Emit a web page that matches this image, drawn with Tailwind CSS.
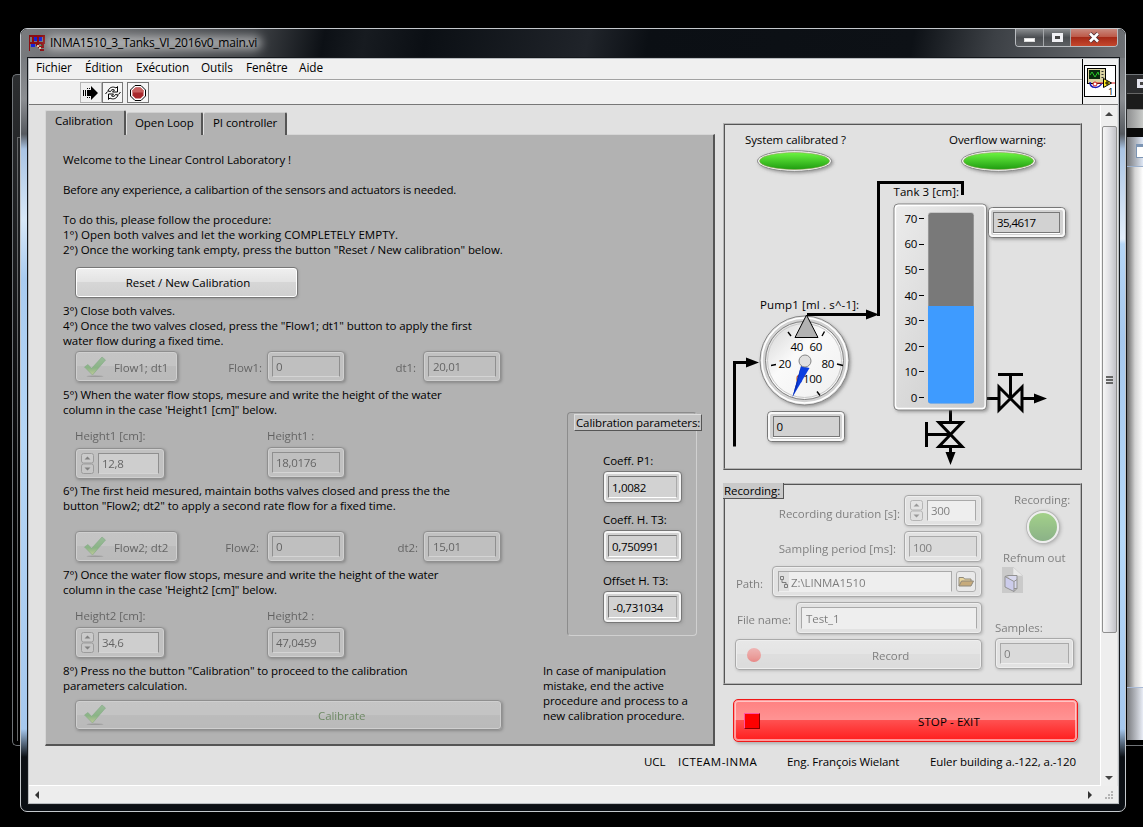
<!DOCTYPE html>
<html lang="fr">
<head>
<meta charset="utf-8">
<title>INMA1510_3_Tanks_VI_2016v0_main.vi</title>
<script src="https://cdn.jsdelivr.net/npm/@tailwindcss/browser@4"></script>
</head>
<body class="relative h-[827px] w-[1143px] overflow-hidden bg-black font-['Open_Sans','Noto_Sans',sans-serif] text-[11.5px] leading-[15px] tracking-[-0.08px] whitespace-nowrap text-black">

<!-- shared symbols -->
<svg class="absolute h-0 w-0">
  <defs>
    <linearGradient id="tick" x1="0" y1="0" x2="0" y2="1"><stop offset="0" stop-color="#7cc47c"/><stop offset="0.6" stop-color="#5cb852"/><stop offset="1" stop-color="#d2e67a"/></linearGradient>
    <symbol id="check" viewBox="0 0 24 22">
      <ellipse cx="12" cy="20.200" rx="8.500" ry=".8" fill="#555" opacity=".6"/>
      <path d="M1.500 11 L5 8.500 L8.500 12.500 L19 1 L22.500 4 L9.500 19 Z" fill="url(#tick)" stroke="#4aa04e" stroke-width=".6"/>
    </symbol>
    <symbol id="spin" viewBox="0 0 13 21">
      <rect x=".5" y=".5" width="12" height="9.500" rx="2" fill="#e8e8e8" stroke="#808080"/>
      <rect x=".5" y="11" width="12" height="9.500" rx="2" fill="#e0e0e0" stroke="#808080"/>
      <path d="M6.500 3.500 L9.500 6.500 H3.500Z M6.500 17.500 L3.500 14.500 H9.500Z" fill="#444"/>
    </symbol>
  </defs>
</svg>

<!-- window behind -->
<div class="absolute left-[12px] top-[74px] h-[672px] w-[1131px] rounded-l-[5px] border border-r-0 border-[#707478] bg-gradient-to-b from-[#2c2e30] via-[#0c0d0f] to-black">
  <div class="absolute left-[4px] top-[62px] h-[604px] w-3 border-l border-t border-[#66686a]"></div>
  <div class="absolute left-[1114px] top-0 flex h-[670px] w-[16px] flex-col overflow-hidden">
    <div class="h-[18px] bg-[#2b2c2e] pl-[10px] pt-[4px]"><div class="h-[9px] w-3 border-[3px] border-[#e4e4ee] bg-[#444]"></div></div>
    <div class="h-[16px] border-t border-[#666] bg-[#1c1c1c]"></div>
    <div class="h-[19px] border-t border-[#888] bg-gradient-to-r from-[#8e8f90] to-[#c8cac8]"></div>
    <div class="h-[9px] bg-[#0a0a0a]"></div>
    <div class="h-[30px] border-b border-[#9bb0cc] bg-gradient-to-r from-[#77797d] to-[#dfe8f6] pl-[9px] pt-[7px]"><div class="h-[14px] w-3 border border-t-[3px] border-[#7c95b4] bg-white"></div></div>
    <div class="h-[520px] bg-gradient-to-r from-[#6a6a6a] via-[#d5d5d5] to-white"></div>
    <div class="h-[53px] border-t border-[#a9bad6] bg-gradient-to-r from-[#7a7c80] to-[#e9edf6]"></div>
    <div class="h-[5px] border-t border-black bg-black"></div>
  </div>
</div>

<!-- main window -->
<div class="absolute left-[20px] top-[28px] flex h-[784px] w-[1106px] flex-col rounded-[7px] border border-[#c4c8cc] bg-[#0b0f14]">
  <!-- glass side borders -->
  <div class="absolute left-0 top-[10px] h-[720px] w-[7px] bg-[linear-gradient(to_bottom,#6f7276_0,#8b8e92_60px,#55595f_95px,#a9c4e4_110px,#d8e8f8_180px,#a9cbf0_240px,#b5d6f6_400px,#a6c8ee_690px,#0b0f14_718px)]"></div>
  <div class="absolute right-0 top-[10px] h-[720px] w-[7px] bg-[linear-gradient(to_bottom,#6f7276_0,#8b8e92_60px,#55595f_95px,#a9c4e4_110px,#e4effb_200px,#b5d6f6_205px,#a6c8ee_300px,#b5d9fa_500px,#a6c8ee_690px,#0b0f14_718px)]"></div>

  <!-- title bar -->
  <div class="relative flex h-[29px] shrink-0 items-start rounded-t-[6px] bg-[linear-gradient(100deg,#797b7e_0,#66686b_90px,#3f4246_230px,#0c1015_300px,#171b20_340px,#0b0f14_400px,#20242a_560px,#0b0f14_620px,#0d1116_880px,#3c4045_960px,#6d7074_1090px)] pl-[8px]">
    <svg class="mt-[6px] h-4 w-4" viewBox="0 0 16 16" shape-rendering="crispEdges">
      <path d="M0 0h16v2H0zM0 0h1v16H0zM3 1h2v6H3zM14 1h2v8h-2zM1 7h15v2H1zM7 8h3v3H7zM9 11h6v2H9zM11 14h4v2h-4z" fill="#8c0e12"/>
      <path d="M5 2h3v4H5zM10 2h3v4h-3z" fill="#1622d8"/><path d="M2 9h4v3H2z" fill="#1622d8"/>
      <path d="M8 10h2v2H8zM10 12h2v2h-2z" fill="#e0c0a0"/><path d="M12 9h3v2h-3z" fill="#8c0e12"/><path d="M12 10h1v1h-1z" fill="#177c28"/><path d="M8 2h2v5H8z" fill="#8c0e12"/>
    </svg>
    <div class="relative ml-[5px] mt-[6px] text-[12px] leading-[16px] tracking-[-0.24px]">
      <div class="absolute -left-1 top-[1px] h-[14px] w-[216px] rounded-full bg-white/50 blur-[5px]"></div>
      <span class="relative">INMA1510_3_Tanks_VI_2016v0_main.vi</span>
    </div>
    <div class="absolute right-[7px] top-0 flex h-[18px] w-[103px] overflow-hidden rounded-b-[4px] border border-t-0 border-[#b9bcc0]">
      <div class="flex w-[28px] justify-center border-r border-[#a4a7aa] bg-gradient-to-b from-[#8a8d90] via-[#4b4e52] to-[#5c5f62] pt-[9px]"><div class="h-[4px] w-[11px] border border-[#ddd] bg-white"></div></div>
      <div class="flex w-[27px] justify-center border-r border-[#a4a7aa] bg-gradient-to-b from-[#8a8d90] via-[#4b4e52] to-[#5c5f62] pt-[4px]"><div class="h-[9px] w-[11px] border-[3px] border-[#f0f0f4] bg-[#444]"></div></div>
      <div class="flex flex-1 justify-center bg-[linear-gradient(#c9897e,#bd5b4a_45%,#a52a18_50%,#c5482d)] pt-[3px]">
        <svg class="h-[11px] w-3" viewBox="0 0 12 11"><path d="M2 1.500 L10 9.500 M10 1.500 L2 9.500" stroke="#4d3035" stroke-width="4.200"/><path d="M2 1.500 L10 9.500 M10 1.500 L2 9.500" stroke="#fff" stroke-width="2.600"/></svg>
      </div>
    </div>
  </div>

  <!-- client area -->
  <div class="relative ml-[7px] mr-[6px] flex h-[746px] flex-col border border-[#b8bcc0] bg-[#e1e1e1] outline outline-1 outline-[#15181c]">
    <!-- menu and toolbar -->
    <div class="flex h-[46px] shrink-0 border-b border-[#777] bg-[#f0f0f0]">
      <div class="flex flex-1 flex-col">
        <div class="flex h-[21px] items-start border-b border-[#a2a2a2] pl-[7px] pt-[1px] text-[11.8px]">
          <span class="w-[49px]">Fichier</span><span class="w-[51px]">Édition</span><span class="w-[65px]">Exécution</span><span class="w-[45px]">Outils</span><span class="w-[53px]">Fenêtre</span><span>Aide</span>
        </div>
        <div class="flex flex-1 border-t border-white pl-[51px] pt-[1px]">
          <div class="flex h-[21px] w-[22px] items-center justify-center border border-[#b5b5b5]">
            <svg class="h-4 w-4" viewBox="0 0 16 16"><path d="M4 5h4V1l7 7-7 7v-4H4z" fill="#000"/><path d="M.5 5v6M2.500 5v6" stroke="#000"/><path d="M4 3.500h3M4 12.500h3" stroke="#000" stroke-dasharray="1 1"/></svg>
          </div>
          <div class="flex h-[21px] w-[21px] items-center justify-center border border-[#777] bg-[#f5f5f5]">
            <svg class="h-4 w-4" viewBox="0 0 16 16" fill="#fff" stroke="#000" stroke-linejoin="round"><path d="M3 6 C4 2.500 8 1 11 3 L12.500 1.500 V7 H7.500 L9.500 5 C7.500 4 6 5 5.500 6.500 Z"/><path d="M13 10 C12 13.500 8 15 5 13 L3.500 14.500 V9 H8.500 L6.500 11 C8.500 12 10 11 10.500 9.500 Z"/><path d="M2.500 6.500 L.5 9 M13.500 9.500 L15.500 7"/></svg>
          </div>
          <div class="ml-[4px] flex h-[21px] w-[22px] items-center justify-center border border-[#777] bg-[#f5f5f5]">
            <svg class="h-4 w-4" viewBox="0 0 16 16"><path d="M5 .5h6L15.500 5v6L11 15.500H5L.5 11V5z" fill="#fff" stroke="#000"/><path d="M5.500 2.500h5l3 3v5l-3 3h-5l-3-3v-5z" fill="#a8282c"/><path d="M5.500 2.500h5l3 3V7.500h-11v-2z" fill="#c8605f"/></svg>
          </div>
        </div>
      </div>
      <div class="w-[36px] border-l border-black pl-[1px] pt-[6px]">
        <svg class="h-8 w-8" viewBox="0 0 32 32">
          <rect x=".5" y=".5" width="31" height="31" fill="#fff" stroke="#000"/>
          <rect x="3.500" y="3.500" width="18" height="15" fill="#d9d2a0" stroke="#000"/><rect x="5" y="5" width="11" height="9" fill="#0b2a0d"/>
          <path d="M6 10 l2-3 l3 5 l3-5 l1 3" fill="none" stroke="#28c828"/><path d="M18.500 6v1M18.500 9v1M18.500 12v1" stroke="#333" stroke-width="2"/>
          <path d="M6 17 c0 7 9 7 12 1" fill="none" stroke="#1a1ab8" stroke-width="1.500"/><circle cx="11" cy="19" r="2" fill="#fff" stroke="#d01818"/><path d="M13 18 h6 M27 18h4" stroke="#e02020" stroke-width="1.200"/>
          <path d="M19.500 13.500 v9 l8-4.500z" fill="#ffe920" stroke="#000"/><path d="M21 18h4M23 16v4" stroke="#000"/>
          <text x="24" y="29.500" font-size="9.500" font-family="Open Sans">1</text>
        </svg>
      </div>
    </div>

    <div class="flex flex-1">
      <!-- front panel -->
      <div class="flex w-[1071px] flex-col border-b border-white pl-[16px] pt-[5px]">
        <div class="flex h-[637px] shrink-0">
          <!-- tabs -->
          <div class="flex w-[670px] flex-col">
            <div class="relative z-10 flex h-[25px] items-end gap-[1px]">
              <div class="h-[25px] w-[81px] rounded-t-[2px] border-l border-r-2 border-t border-l-[#d6d6d6] border-r-[#555] border-t-[#d6d6d6] bg-[#b2b2b2] pl-[9px] pt-[2px]">Calibration</div>
              <div class="h-[23px] w-[76px] rounded-t-[2px] border-r-2 border-t border-r-[#555] border-t-[#d0d0d0] bg-[#b2b2b2] pl-[8px] pt-[2px]">Open Loop</div>
              <div class="h-[23px] w-[83px] rounded-t-[2px] border-r-2 border-t border-r-[#555] border-t-[#d0d0d0] bg-[#b2b2b2] pl-[9px] pt-[2px]">PI controller</div>
            </div>
            <div class="-mt-[1px] flex h-[612px] border-b-2 border-l border-r-2 border-t border-[#555] border-l-[#d6d6d6] border-t-[#d6d6d6] bg-[#b2b2b2]">
              <div class="flex w-[497px] flex-col pl-[17px] pt-[17px]">
                <p class="whitespace-pre">Welcome to the Linear Control Laboratory !

<span class="tracking-[-0.17px]">Before any experience, a calibartion of the sensors and actuators is needed.</span>

To do this, please follow the procedure:
<span class="tracking-[0.02px]">1°) Open both valves and let the working COMPLETELY EMPTY.</span>
<span class="tracking-[-0.06px]">2°) Once the working tank empty, press the button "Reset / New calibration" below.</span></p>
                <div class="ml-[12px] mt-[10px] flex h-[31px] w-[223px] items-center justify-center rounded-[4px] border border-[#777] bg-[linear-gradient(#f0f0f0,#e2e2e2_50%,#d6d6d6_50%,#cfcfcf)] pl-[3px] tracking-[-0.04px] shadow-[inset_0_0_0_1px_#fff,1px_1px_2px_#8886]">Reset / New Calibration</div>
                <p class="mt-[5px]">3°) Close both valves.<br>4°) Once the two valves closed, press the "Flow1; dt1" button to apply the first<br>water flow during a fixed time.</p>
                <div class="ml-[12px] mt-[3px] flex h-[31px] items-center opacity-45">
                  <div class="flex h-[31px] w-[103px] items-center rounded-[4px] border border-[#666] bg-[linear-gradient(#dcdcdc,#dadada_50%,#c9c9c9_50%,#c4c4c4)] pl-[7px] shadow-[inset_0_0_0_1px_#f2f2f2,1px_1px_3px_#555]"><svg class="h-[22px] w-6"><use href="#check"/></svg><span class="ml-[7px] pt-[1px]">Flow1; dt1</span></div>
                  <div class="w-[89px] pr-[5px] pt-[1px] text-right">Flow1:</div>
                  <div class="h-[31px] w-[78px] rounded-[4px] border border-[#666] bg-[#d4d4d4] p-[4px] shadow-[inset_0_0_0_1px_#f5f5f5,1px_1px_3px_#555]"><div class="h-[21px] border border-[#666] border-b-white bg-[#cfcfcf] pl-[3px] pt-[2px] tracking-[-0.3px]">0</div></div>
                  <div class="w-[78px] pr-[7px] pt-[1px] text-right">dt1:</div>
                  <div class="h-[31px] w-[78px] rounded-[4px] border border-[#666] bg-[#d4d4d4] p-[4px] shadow-[inset_0_0_0_1px_#f5f5f5,1px_1px_3px_#555]"><div class="h-[21px] border border-[#666] border-b-white bg-[#cfcfcf] pl-[4px] pt-[2px] tracking-[-0.3px]">20,01</div></div>
                </div>
                <p class="mt-[5px]"><span class="tracking-[-0.11px]">5°) When the water flow stops, mesure and write the height of the water</span><br>column in the case 'Height1 [cm]" below.</p>
                <div class="ml-[12px] mt-[11px] flex h-[50px] gap-[102px] opacity-45">
                  <div class="w-[90px]">
                    <div>Height1 [cm]:</div>
                    <div class="mt-[5px] flex h-[31px] items-center gap-[4px] rounded-[4px] border border-[#666] bg-[#d4d4d4] px-[5px] shadow-[inset_0_0_0_1px_#f5f5f5,1px_1px_3px_#555]"><svg class="h-[21px] w-[13px]"><use href="#spin"/></svg><div class="h-[21px] flex-1 border border-[#666] border-b-white bg-[#f0f0f0] pl-[3px] pt-[2px] tracking-[-0.3px]">12,8</div></div>
                  </div>
                  <div class="w-[78px]">
                    <div>Height1 :</div>
                    <div class="mt-[4px] h-[31px] rounded-[4px] border border-[#666] bg-[#d4d4d4] p-[4px] shadow-[inset_0_0_0_1px_#f5f5f5,1px_1px_3px_#555]"><div class="h-[21px] border border-[#666] border-b-white bg-[#cfcfcf] pl-[3px] pt-[2px] tracking-[-0.3px]">18,0176</div></div>
                  </div>
                </div>
                <p class="mt-[5px]"><span class="tracking-[-0.12px]">6°) The first heid mesured, maintain boths valves closed and press the the</span><br>button "Flow2; dt2" to apply a second rate flow for a fixed time.</p>
                <div class="ml-[12px] mt-[18px] flex h-[31px] items-center opacity-45">
                  <div class="flex h-[31px] w-[103px] items-center rounded-[4px] border border-[#666] bg-[linear-gradient(#dcdcdc,#dadada_50%,#c9c9c9_50%,#c4c4c4)] pl-[7px] shadow-[inset_0_0_0_1px_#f2f2f2,1px_1px_3px_#555]"><svg class="h-[22px] w-6"><use href="#check"/></svg><span class="ml-[7px] pt-[1px]">Flow2; dt2</span></div>
                  <div class="w-[89px] pr-[8px] pt-[1px] text-right">Flow2:</div>
                  <div class="h-[31px] w-[78px] rounded-[4px] border border-[#666] bg-[#d4d4d4] p-[4px] shadow-[inset_0_0_0_1px_#f5f5f5,1px_1px_3px_#555]"><div class="h-[21px] border border-[#666] border-b-white bg-[#cfcfcf] pl-[3px] pt-[2px] tracking-[-0.3px]">0</div></div>
                  <div class="w-[78px] pr-[5px] pt-[1px] text-right">dt2:</div>
                  <div class="h-[31px] w-[78px] rounded-[4px] border border-[#666] bg-[#d4d4d4] p-[4px] shadow-[inset_0_0_0_1px_#f5f5f5,1px_1px_3px_#555]"><div class="h-[21px] border border-[#666] border-b-white bg-[#cfcfcf] pl-[4px] pt-[2px] tracking-[-0.3px]">15,01</div></div>
                </div>
                <p class="mt-[5px]"><span class="tracking-[-0.11px]">7°) Once the water flow stops, mesure and write the height of the water</span><br>column in the case 'Height2 [cm]" below.</p>
                <div class="ml-[12px] mt-[11px] flex h-[50px] gap-[102px] opacity-45">
                  <div class="w-[90px]">
                    <div>Height2 [cm]:</div>
                    <div class="mt-[4px] flex h-[31px] items-center gap-[4px] rounded-[4px] border border-[#666] bg-[#d4d4d4] px-[5px] shadow-[inset_0_0_0_1px_#f5f5f5,1px_1px_3px_#555]"><svg class="h-[21px] w-[13px]"><use href="#spin"/></svg><div class="h-[21px] flex-1 border border-[#666] border-b-white bg-[#f0f0f0] pl-[3px] pt-[2px] tracking-[-0.3px]">34,6</div></div>
                  </div>
                  <div class="w-[78px]">
                    <div>Height2 :</div>
                    <div class="mt-[4px] h-[31px] rounded-[4px] border border-[#666] bg-[#d4d4d4] p-[4px] shadow-[inset_0_0_0_1px_#f5f5f5,1px_1px_3px_#555]"><div class="h-[21px] border border-[#666] border-b-white bg-[#cfcfcf] pl-[3px] pt-[2px] tracking-[-0.3px]">47,0459</div></div>
                  </div>
                </div>
                <p class="mt-[5px]">8°) Press no the button "Calibration" to proceed to the calibration<br>parameters calculation.</p>
                <div class="ml-[12px] mt-[7px] flex h-[30px] w-[427px] items-center rounded-[4px] border border-[#666] bg-[linear-gradient(#dcdcdc,#dadada_50%,#c9c9c9_50%,#c4c4c4)] pl-[7px] opacity-45 shadow-[inset_0_0_0_1px_#f2f2f2,1px_1px_3px_#555]"><svg class="h-[22px] w-6"><use href="#check"/></svg><span class="ml-[211px] text-[#1d5a08]">Calibrate</span></div>
              </div>
              <!-- calibration parameters -->
              <div class="flex flex-col pt-[277px]">
                <div class="relative ml-[24px] h-[224px] w-[130px] rounded-[4px] border border-[#8c8c8c] border-b-[#d0d0d0] border-r-[#d0d0d0] pl-[35px] pt-[40px]">
                  <div class="absolute left-[6px] top-[1px] h-[17px] w-[128px] border border-[#ddd] border-b-[#555] border-r-[#555] bg-[#c4c4c4] pl-[1px] leading-[15px] tracking-[-0.12px]">Calibration parameters:</div>
                  <div>Coeff. P1:</div>
                  <div class="mt-[3px] h-[32px] w-[79px] rounded-[4px] border border-[#777] bg-[#d2d2d2] p-[4px] shadow-[inset_0_0_0_2px_#f5f5f5,1px_1px_3px_#8888]"><div class="h-[22px] border border-[#777] border-b-white border-r-[#aaa] bg-[#d2d2d2] pl-[3px] pt-[3px] tracking-[-0.3px]">1,0082</div></div>
                  <div class="mt-[9px]">Coeff. H. T3:</div>
                  <div class="mt-[3px] h-[32px] w-[79px] rounded-[4px] border border-[#777] bg-[#d2d2d2] p-[4px] shadow-[inset_0_0_0_2px_#f5f5f5,1px_1px_3px_#8888]"><div class="h-[22px] border border-[#777] border-b-white border-r-[#aaa] bg-[#d2d2d2] pl-[3px] pt-[3px] tracking-[-0.3px]">0,750991</div></div>
                  <div class="mt-[11px]">Offset H. T3:</div>
                  <div class="mt-[3px] h-[32px] w-[79px] rounded-[4px] border border-[#777] bg-[#d2d2d2] p-[4px] shadow-[inset_0_0_0_2px_#f5f5f5,1px_1px_3px_#8888]"><div class="h-[22px] border border-[#777] border-b-white border-r-[#aaa] bg-[#d2d2d2] pl-[4px] pt-[3px] tracking-[-0.3px]">-0,731034</div></div>
                </div>
                <p class="mt-[27px] tracking-[-0.1px]">In case of manipulation<br>mistake, end the active<br>procedure and process to a<br>new calibration procedure.</p>
              </div>
            </div>
          </div>

          <!-- right column -->
          <div class="ml-[8px] flex w-[359px] flex-col pt-[13px]">
            <div class="h-[347px] border border-[#555] border-l-[#b4b4b4] border-t-[#b4b4b4]">
              <div class="h-full border border-[#b4b4b4] border-l-[#555] border-t-[#555]">
                <svg class="block h-[343px] w-[355px]" viewBox="725 125 355 343" font-family="'Open Sans','Noto Sans',sans-serif" font-size="11.5">
                  <defs>
                    <linearGradient id="led" x1="0" y1="0" x2="0" y2="1"><stop offset="0" stop-color="#6cf542"/><stop offset="1" stop-color="#1f9c10"/></linearGradient>
                    <linearGradient id="box" x1="0" y1="0" x2="1" y2="1"><stop offset="0" stop-color="#ececec"/><stop offset="1" stop-color="#c8c8c8"/></linearGradient>
                    <linearGradient id="face" x1="0" y1="0" x2="1" y2="1"><stop offset="0" stop-color="#d4d4d4"/><stop offset=".4" stop-color="#fafafa"/><stop offset="1" stop-color="#f0f0f0"/></linearGradient>
                    <filter id="soft" x="-20%" y="-20%" width="140%" height="150%"><feDropShadow dx="1.500" dy="1.500" stdDeviation="1.500" flood-color="#555" flood-opacity=".5"/></filter>
                  </defs>
                  <text x="745" y="143.500" textLength="101">System calibrated ?</text>
                  <text x="949" y="143.500" textLength="97">Overflow warning:</text>
                  <g filter="url(#soft)"><ellipse cx="794.500" cy="161" rx="37" ry="10.300" fill="#fff" stroke="#888"/><ellipse cx="998.500" cy="161" rx="37" ry="10.300" fill="#fff" stroke="#888"/></g>
                  <ellipse cx="794.500" cy="161" rx="35" ry="8.500" fill="url(#led)" stroke="#8a9a50" stroke-width=".6"/>
                  <ellipse cx="998.500" cy="161" rx="35" ry="8.500" fill="url(#led)" stroke="#8a9a50" stroke-width=".6"/>

                  <!-- pump gauge -->
                  <text x="760" y="309" textLength="99">Pump1 [ml . s^-1]:</text>
                  <circle cx="804.500" cy="360.500" r="44.500" fill="#e2e2e2" stroke="#858585" filter="url(#soft)"/>
                  <circle cx="804.500" cy="360.500" r="42.500" fill="#d2d2d2" stroke="#fff" stroke-width="1.500"/>
                  <circle cx="804.500" cy="360.500" r="39" fill="url(#face)" stroke="#808080"/>
                  <circle cx="804.500" cy="360.500" r="37" fill="url(#face)" stroke="#c8c8c8"/>
                  <path d="M771 365.500l5-1M837 364l6 1.500M788 332l3 4M824.500 331.500l-2.500 4.500M817 391.500l3 4" stroke="#000" stroke-width="1.400"/>
                  <g letter-spacing="-.3"><text x="790.500" y="351">40</text><text x="809.500" y="351">60</text><text x="778.500" y="368">20</text><text x="821.500" y="368">80</text><text x="796" y="383" fill="#8c1a1a">0</text><text x="803" y="383">100</text></g>
                  <path d="M801 366 L809.500 368 L792.500 397 Z" fill="#0a3ee0"/><path d="M801 366 L792.500 397 L797 387Z" fill="#0a2cb0"/>
                  <circle cx="805" cy="361" r="6" fill="#e0e0e0" stroke="#858585"/>
                  <path d="M806.500 315 L795 337.500 H818Z" fill="#b2b2b2" stroke="#000"/>

                  <!-- pipes -->
                  <g fill="none" stroke="#000" stroke-width="3">
                    <path d="M734.500 446.500V362.500H750M807 314.500H870M878.500 316V182.500H962.500V195M950.500 410V423M950.500 446V453M987 398.500H998M1023 398.500H1036"/>
                    <path d="M939 422.500H962L939 446.500H962Z M999 387V410L1022 387V410Z" stroke-linejoin="miter"/>
                    <path d="M926.500 422V447M926.500 434.500H950M998 374.500H1023M1010.500 375V398"/>
                  </g>
                  <path d="M746 357.500l13 5-13 5zM866 309.500l13 5-13 5zM945.500 452h10l-5 13zM1034 393.500l13 5-13 5z"/>

                  <!-- tank -->
                  <text x="893.500" y="196" textLength="65.500">Tank 3 [cm]:</text>
                  <rect x="894" y="204" width="92.500" height="206" rx="4" fill="url(#box)" stroke="#858585" filter="url(#soft)"/>
                  <rect x="895.500" y="205.500" width="89.600" height="203" rx="3" fill="none" stroke="#fff" stroke-width="1.300"/>
                  <rect x="928" y="212.500" width="46" height="191" rx="3" fill="#797979" stroke="#d8d8d8" stroke-width=".6"/>
                  <path d="M928 306h46v94.500a3 3 0 0 1-3 3h-40a3 3 0 0 1-3-3z" fill="#3e9bff"/>
                  <g text-anchor="end" letter-spacing="-.3"><text x="917" y="222.500">70</text><text x="917" y="248.200">60</text><text x="917" y="274">50</text><text x="917" y="299.600">40</text><text x="917" y="325">30</text><text x="917" y="351">20</text><text x="917" y="376">10</text><text x="917" y="402">0</text></g>
                  <path d="M919 218.500h5M919 244.500h5M919 269.500h5M919 295.500h5M919 320.500h5M919 346.500h5M919 371.500h5M919 397.500h5" stroke="#000"/>

                  <!-- indicators -->
                  <g filter="url(#soft)"><rect x="988.500" y="207.500" width="77" height="30" rx="4" fill="#d2d2d2" stroke="#777"/><rect x="767.500" y="411.500" width="77" height="30" rx="4" fill="#d2d2d2" stroke="#777"/></g>
                  <rect x="990" y="209" width="74" height="27" rx="3" fill="none" stroke="#f8f8f8" stroke-width="2"/><rect x="769" y="413" width="74" height="27" rx="3" fill="none" stroke="#f8f8f8" stroke-width="2"/>
                  <rect x="993.500" y="212.500" width="66" height="20" fill="#d2d2d2" stroke="#777"/><path d="M993 233.500h67" stroke="#fff"/><text x="997" y="227" textLength="39">35,4617</text>
                  <rect x="773.500" y="416.500" width="66" height="20" fill="#d2d2d2" stroke="#777"/><path d="M773 437.500h67" stroke="#fff"/><text x="776.500" y="431">0</text>
                </svg>
              </div>
            </div>

            <!-- recording -->
            <div class="mt-[13px] h-[202px] border border-[#555] border-l-[#b4b4b4] border-t-[#b4b4b4]">
              <div class="relative flex h-full border border-[#b4b4b4] border-l-[#555] border-t-[#555]">
                <div class="absolute -left-[2px] -top-[2px] h-[16px] w-[61px] border-b border-r border-[#555] bg-[#c9c9c9] pl-[1px]">Recording:</div>
                <div class="flex w-[257px] flex-col items-end pt-[10px] opacity-45">
                  <div class="flex items-center"><span class="mr-[4px] mt-[5px] tracking-[-0.04px]">Recording duration [s]:</span>
                    <div class="flex h-[31px] w-[78px] items-center gap-[4px] rounded-[4px] border border-[#666] bg-[#e4e4e4] px-[5px] shadow-[inset_0_0_0_1px_#fff,1px_1px_3px_#888]"><svg class="h-[21px] w-[13px]"><use href="#spin"/></svg><div class="h-[21px] flex-1 border border-[#666] border-b-white bg-white pl-[3px] pt-[2px] tracking-[-0.3px]">300</div></div></div>
                  <div class="mt-[5px] flex items-center"><span class="mr-[8px] mt-[4px] tracking-[0px]">Sampling period [ms]:</span>
                    <div class="h-[31px] w-[78px] rounded-[4px] border border-[#666] bg-[#e4e4e4] p-[4px] shadow-[inset_0_0_0_1px_#fff,1px_1px_3px_#888]"><div class="h-[21px] border border-[#666] border-b-white bg-[#d2d2d2] pl-[3px] pt-[3px] tracking-[-0.3px]">100</div></div></div>
                  <div class="mt-[4px] flex items-center"><span class="mr-[9px] mt-[4px]">Path:</span>
                    <div class="flex h-[31px] w-[210px] items-center gap-[4px] rounded-[4px] border border-[#666] bg-[#e4e4e4] px-[5px] shadow-[inset_0_0_0_1px_#fff,1px_1px_3px_#888]">
                      <div class="flex h-[21px] flex-1 border border-[#666] border-b-white bg-white tracking-[-0.1px]"><div class="flex w-[10px] items-center justify-center bg-[#ddd]"><svg class="h-3 w-2" viewBox="0 0 8 12" fill="none" stroke="#000"><path d="M.5.5h3v3h-3zM4.500 8.500h3v3h-3zM2 4v2.500h4v2"/></svg></div><span class="pl-[2px] pt-[3px]">Z:\LINMA1510</span></div>
                      <div class="flex h-[21px] w-5 items-center justify-center rounded-[3px] border border-[#777] bg-[#f4f4f4]"><svg class="h-[11px] w-4" viewBox="0 0 16 11"><path d="M1 10V1.500h4.500l1 1.500H13v2" fill="#f5c950" stroke="#2e1f00"/><path d="M1 10l2.500-5H15.500l-2.500 5z" fill="#a86c00" stroke="#2e1f00"/></svg></div>
                    </div></div>
                  <div class="mt-[5px] flex items-center"><span class="mr-[5px] mt-[3px]">File name:</span>
                    <div class="h-[32px] w-[186px] rounded-[4px] border border-[#666] bg-[#e4e4e4] p-[4px] shadow-[inset_0_0_0_1px_#fff,1px_1px_3px_#888]"><div class="h-[22px] border border-[#666] border-b-white bg-white pl-[4px] pt-[3px]">Test_1</div></div></div>
                  <div class="mt-[5px] flex h-[31px] w-[247px] items-center rounded-[4px] border border-[#666] bg-[linear-gradient(#f0f0f0,#eaeaea_50%,#dcdcdc_50%,#d6d6d6)] shadow-[inset_0_0_0_1px_#fff,1px_1px_3px_#888]"><div class="ml-[11px] h-[14px] w-[14px] rounded-full bg-gradient-to-b from-[#ff8080] to-[#f01818]"></div><span class="ml-[111px] pt-[1px]">Record</span></div>
                </div>
                <div class="flex flex-1 flex-col pl-[13px] pt-[7px] opacity-45">
                  <div class="pl-[19px]">Recording:</div>
                  <div class="ml-[32px] mt-[4px] h-[32px] w-[32px] rounded-full border-2 border-white bg-gradient-to-b from-[#58be1f] to-[#247a1c] shadow-[0_0_0_1px_#888,1px_1px_4px_#444]"></div>
                  <div class="mt-[7px] pl-[8px]">Refnum out</div>
                  <svg class="ml-[7px] mt-[2px] h-[26px] w-[21px]" viewBox="0 0 21 26"><path d="M0 0h11l10 10v16H0z" fill="#b0b0b0"/><path d="M11 0l10 9H11z" fill="#f4f4f4" stroke="#aaa" stroke-width=".6"/><path d="M6 8.500h9v13l-3 0" fill="#d0d0ff" stroke="#333"/><path d="M3 9.500l9 5v10l-9-4.500z" fill="#b4b4f8" stroke="#333"/><path d="M3 9.500l3-1M12 14.500l3-2M12 24.500l3-3" fill="none" stroke="#333"/></svg>
                  <div class="mt-[27px]">Samples:</div>
                  <div class="mt-[3px] h-[31px] w-[79px] rounded-[4px] border border-[#666] bg-[#e4e4e4] p-[4px] shadow-[inset_0_0_0_1px_#fff,1px_1px_3px_#888]"><div class="h-[21px] border border-[#666] border-b-white bg-[#d2d2d2] pl-[3px] pt-[2px]">0</div></div>
                </div>
              </div>
            </div>

            <div class="ml-[10px] mt-[14px] flex h-[43px] w-[345px] shrink-0 items-center rounded-[5px] border border-[#f01818] bg-[linear-gradient(#ff8080,#ff9494_50%,#ff5050_50%,#ff1c1c)] shadow-[inset_0_0_0_1px_#ff9a9a,inset_0_0_0_2px_#fff8,2px_2px_3px_#8888]">
              <div class="ml-[10px] h-4 w-4 border border-b-[#800] border-l-[#ff50a0] border-r-[#800] border-t-[#ff50a0] bg-[#fe0000]"></div>
              <span class="ml-[158px] pt-[1px] tracking-[0.1px]">STOP - EXIT</span>
            </div>
          </div>
        </div>
        <div class="flex pl-[599px] pt-[7px]"><span class="w-[34px]">UCL</span><span class="w-[109px] tracking-[0.48px]">ICTEAM-INMA</span><span class="w-[143px]">Eng. François Wielant</span><span>Euler building a.-122, a.-120</span></div>
      </div>
      <!-- vertical scrollbar -->
      <div class="flex w-[17px] flex-col items-center border-l border-white bg-[#eeeeee]">
        <div class="mt-[7px] border-x-4 border-b-4 border-x-transparent border-b-[#444]"></div>
        <div class="mt-[10px] flex h-[507px] w-[15px] flex-col items-center justify-center gap-[1px] rounded-[2px] border border-[#8f8f8f] bg-gradient-to-r from-[#f6f6f6] via-[#e0e0e4] to-[#c2c2c8]"><div class="h-[2px] w-[7px] bg-[#666]"></div><div class="h-[2px] w-[7px] bg-[#666]"></div><div class="h-[2px] w-[7px] bg-[#666]"></div></div>
        <div class="mt-[143px] border-x-4 border-t-4 border-x-transparent border-t-[#444]"></div>
      </div>
    </div>
    <!-- horizontal scrollbar -->
    <div class="flex h-[17px] shrink-0 items-center justify-between bg-[#ededed] pl-[6px] pr-[4px]">
      <div class="border-y-4 border-r-4 border-y-transparent border-r-[#333]"></div>
      <div class="flex items-center gap-[8px]"><div class="mr-[4px] border-y-4 border-l-4 border-y-transparent border-l-[#333]"></div>
        <svg class="h-[10px] w-[10px]" viewBox="0 0 10 10" fill="#b4b4b4"><path d="M7 1h2v2H7zM4 4h2v2H4zM7 4h2v2H7zM1 7h2v2H1zM4 7h2v2H4zM7 7h2v2H7z"/></svg></div>
    </div>
  </div>
</div>
</body>
</html>
